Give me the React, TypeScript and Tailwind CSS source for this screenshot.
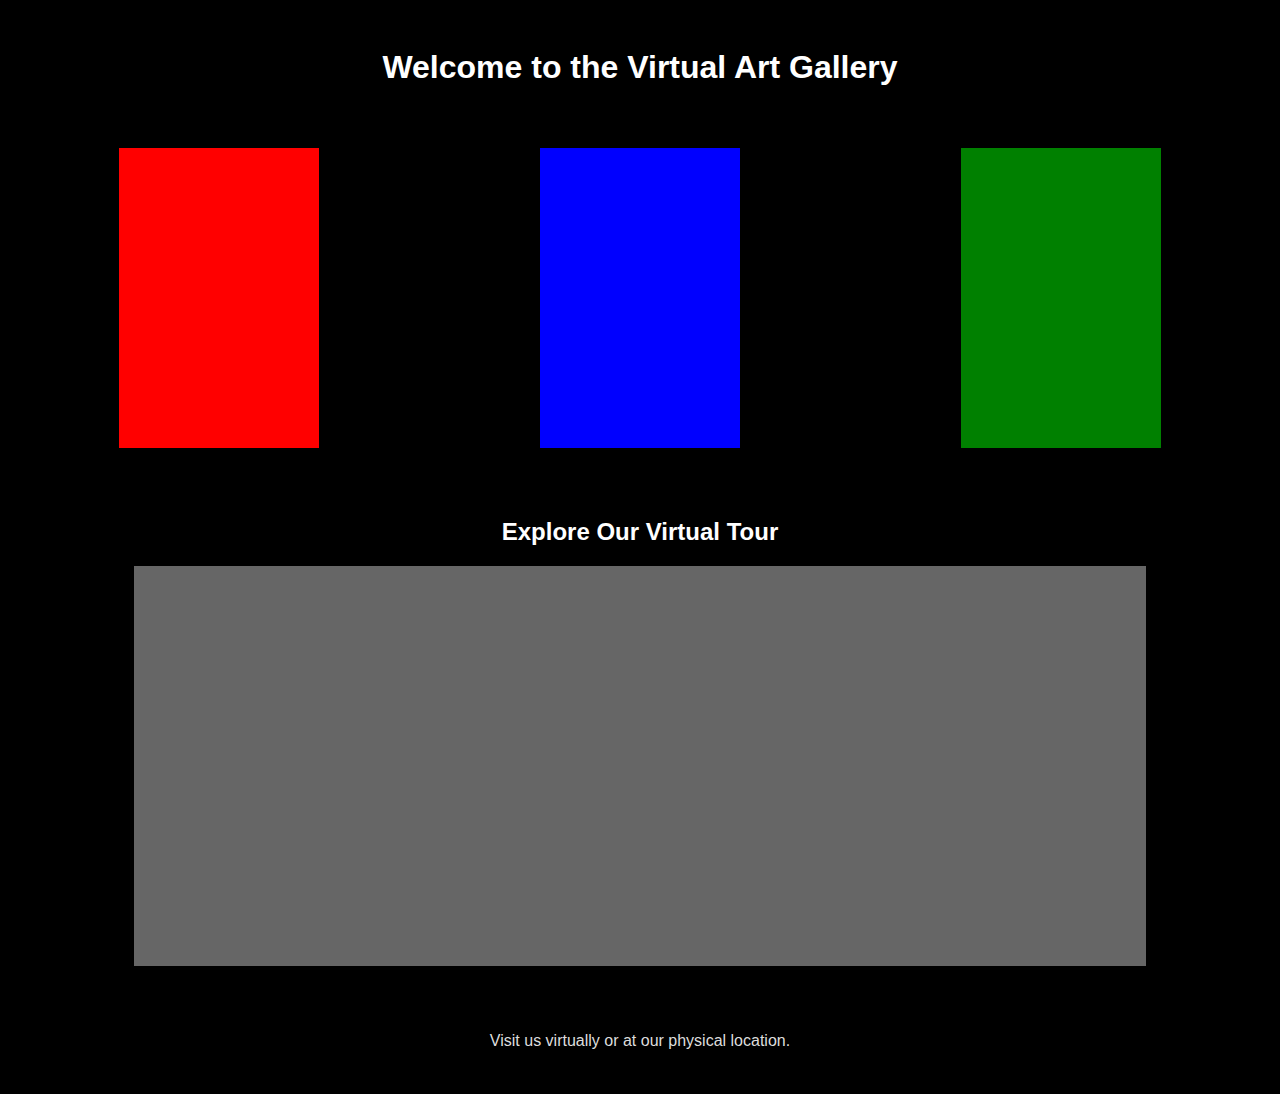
const paintings = [
  { id: 'red', color: 'bg-[#ff0000]' },
  { id: 'blue', color: 'bg-[#0000ff]' },
  { id: 'green', color: 'bg-[#008000]' },
];

export default function App() {
  return (
    <div className="min-h-screen bg-black px-2 text-white font-['Liberation_Sans',Arial,sans-serif]">
      <header className="pt-[49px] text-center">
        <h1 className="text-[32px] font-bold leading-[37px]">Welcome to the Virtual Art Gallery</h1>
      </header>

      <section className="mt-[62px] flex justify-around">
        {paintings.map((p) => (
          <div key={p.id} className={`mx-[10px] h-[300px] w-[200px] ${p.color}`} />
        ))}
      </section>

      <section className="mt-[70px] text-center">
        <h2 className="text-[24px] font-bold leading-[28px]">Explore Our Virtual Tour</h2>
        <div className="mx-auto mt-[20px] h-[400px] w-[80%] bg-[#666666]" />
      </section>

      <footer className="mt-[66px] pb-[40px] text-center">
        <p className="text-[16px] leading-[18px] text-[#dddddd]">Visit us virtually or at our physical location.</p>
      </footer>
    </div>
  );
}
